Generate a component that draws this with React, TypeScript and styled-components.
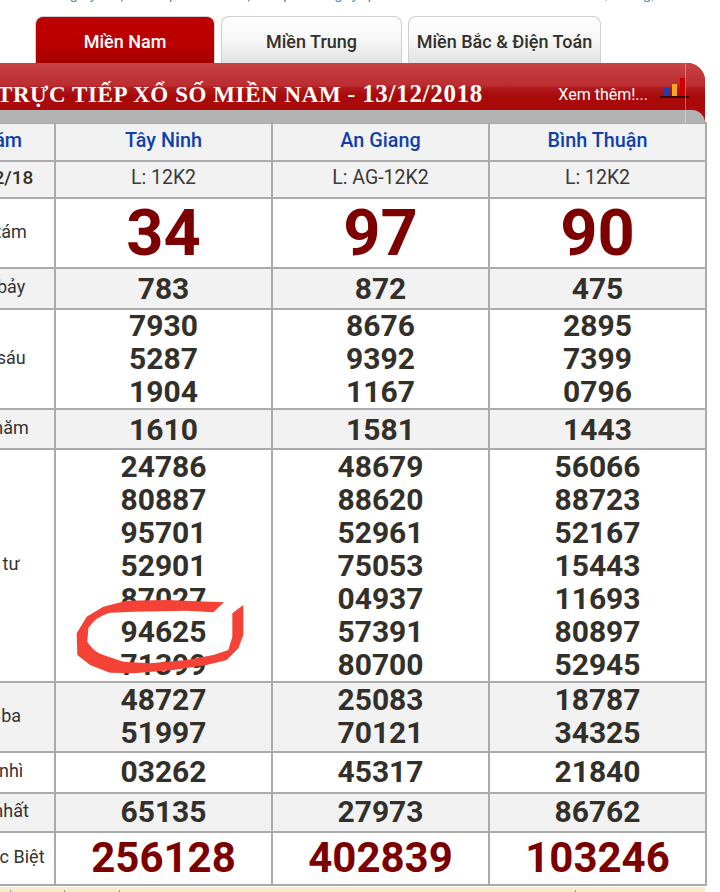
import React from "react";
import styled, { createGlobalStyle } from "styled-components";

const provinces = ["Tây Ninh", "An Giang", "Bình Thuận"];

interface PrizeRow {
  label: string;
  height: number;
  shaded?: boolean;
  size?: "huge" | "special";
  lift?: number;
  numbers: string[][];
}

const rows: PrizeRow[] = [
  { label: "Giải tám", height: 70, size: "huge", numbers: [["34"], ["97"], ["90"]] },
  { label: "Giải bảy", height: 41, shaded: true, numbers: [["783"], ["872"], ["475"]] },
  {
    label: "Giải sáu",
    height: 100,
    lift: 1,
    numbers: [
      ["7930", "5287", "1904"],
      ["8676", "9392", "1167"],
      ["2895", "7399", "0796"],
    ],
  },
  { label: "Giải năm", height: 40, shaded: true, numbers: [["1610"], ["1581"], ["1443"]] },
  {
    label: "Giải tư",
    height: 233,
    numbers: [
      ["24786", "80887", "95701", "52901", "87027", "94625", "71399"],
      ["48679", "88620", "52961", "75053", "04937", "57391", "80700"],
      ["56066", "88723", "52167", "15443", "11693", "80897", "52945"],
    ],
  },
  {
    label: "Giải ba",
    height: 70,
    shaded: true,
    lift: 1,
    numbers: [
      ["48727", "51997"],
      ["25083", "70121"],
      ["18787", "34325"],
    ],
  },
  { label: "Giải nhì", height: 41, lift: 1, numbers: [["03262"], ["45317"], ["21840"]] },
  { label: "Giải nhất", height: 39, shaded: true, lift: 1, numbers: [["65135"], ["27973"], ["86762"]] },
  { label: "Giải Đặc Biệt", height: 53, size: "special", lift: 1, numbers: [["256128"], ["402839"], ["103246"]] },
];

const footerCells = [11, 54, 55, 456];

const GlobalStyle = createGlobalStyle`
  html, body {
    margin: 0;
    background: #fff;
    overflow: hidden;
  }
  body {
    font-family: Roboto, "Liberation Sans", sans-serif;
  }
`;

const Page = styled.div`
  position: relative;
  width: 720px;
  height: 892px;
  overflow: hidden;
  background: #fff;
`;

const TopLine = styled.div`
  height: 3px;
  padding-left: 42px;
  display: flex;
  align-items: flex-end;
  overflow: hidden;
  color: #5b8ba5;
  font-size: 15.5px;
  line-height: 18px;
  white-space: nowrap;
  filter: blur(0.6px);
`;

const Tabs = styled.div`
  display: flex;
  gap: 6px;
  margin-top: 13px;
  padding-left: 35px;
`;

const Tab = styled.div<{ $active?: boolean; $width: number }>`
  box-sizing: border-box;
  width: ${(p) => p.$width}px;
  height: 47px;
  display: flex;
  align-items: center;
  justify-content: center;
  border: 1px solid #cfcfcf;
  border-bottom: 0;
  border-radius: 8px 8px 0 0;
  font-size: 18px;
  font-weight: 500;
  padding-top: 3px;
  color: ${(p) => (p.$active ? "#fff" : "#33302a")};
  background: ${(p) =>
    p.$active
      ? "linear-gradient(#bd0000, #bb0000 55%, #a50000)"
      : "linear-gradient(#fff, #f7f7f7 50%, #e2e2e2)"};
`;

const Banner = styled.div`
  position: relative;
  width: 705px;
  height: 60px;
  background: #a90c0c;
  border-top-right-radius: 18px;
  overflow: hidden;
`;

const BannerTitleRow = styled.div`
  height: 47px;
  display: flex;
  align-items: center;
  padding-top: 15px;
  box-sizing: border-box;
  background: linear-gradient(#c84346, #bb2c30 48%, #b0191c 54%, #a70808 72%, #ad0b0b);
`;

const BannerTitle = styled.div`
  font-family: "Liberation Serif", serif;
  font-weight: 700;
  font-size: 23px;
  letter-spacing: 0.58px;
  color: #fff;
  margin-left: -3px;
  white-space: nowrap;
`;

const BannerDate = styled.span`
  font-size: 25px;
  letter-spacing: 0.7px;
`;

const MoreLink = styled.a`
  margin-left: auto;
  margin-right: 57px;
  font-size: 16px;
  color: #fff;
  white-space: nowrap;
`;

const BannerShadow = styled.div`
  height: 13px;
  background: #b3b3b3;
  border-top-right-radius: 14px;
`;

const ChartMark = styled.svg`
  position: absolute;
  top: 0;
  left: 655px;
`;

const ResultTable = styled.table`
  table-layout: fixed;
  border-collapse: collapse;
  margin-top: -1px;
  margin-left: -69px;
  width: 774px;
`;

const LabelCol = styled.col`
  width: 123px;
`;

const ProvinceCol = styled.col`
  width: 217px;
`;

const Row = styled.tr<{ $height: number; $shaded?: boolean }>`
  height: ${(p) => p.$height}px;
  background: ${(p) => (p.$shaded ? "#f2f2f2" : "#fff")};
`;

const Cell = styled.td`
  padding: 0;
  border: 2px solid #ababab;
  text-align: center;
  vertical-align: middle;
`;

const HeaderText = styled.span`
  font-size: 19.8px;
  font-weight: 500;
  color: #0f3fae;
  position: relative;
  top: -2px;
`;

const DateText = styled.span`
  font-size: 19px;
  font-weight: 500;
  color: #33302a;
  position: relative;
  top: -2px;
`;

const LotText = styled.span`
  font-size: 19.5px;
  color: #3a3a3a;
  position: relative;
  top: -2px;
`;

const LabelText = styled.span`
  font-size: 18px;
  color: #333;
  position: relative;
  top: -2px;
`;

const Numbers = styled.div<{ $lift: number }>`
  display: flex;
  flex-direction: column;
  margin: -2px 0;
  transform: translateY(${(p) => -p.$lift}px);
`;

const sizes = { normal: 30, huge: 65, special: 42 };

const Num = styled.div<{ $size: keyof typeof sizes }>`
  font-size: ${(p) => sizes[p.$size]}px;
  line-height: ${(p) => (p.$size === "normal" ? "33px" : "1")};
  font-weight: 700;
  color: ${(p) => (p.$size === "normal" ? "#33302a" : "#7d0000")};
`;

const FooterStrip = styled.div`
  display: flex;
  margin-top: 1px;
  height: 8px;
  width: 705px;
  background: #f7ebc9;
  overflow: hidden;
`;

const FooterCell = styled.div<{ $width: number }>`
  box-sizing: border-box;
  width: ${(p) => p.$width}px;
  margin-top: 3px;
  border-right: 1px solid #999;
`;

const Scribble = styled.svg`
  position: absolute;
  left: 0;
  top: 570px;
`;

export default function App() {
  return (
    <Page>
      <GlobalStyle />
      <TopLine>Đăng ký nhận kết quả xổ số trực tiếp mỗi ngày qua tin nhắn của các đài miền Nam, Trung, Bắc nhanh nhất</TopLine>
      <Tabs>
        <Tab $active $width={180}>Miền Nam</Tab>
        <Tab $width={181}>Miền Trung</Tab>
        <Tab $width={193}>Miền Bắc &amp; Điện Toán</Tab>
      </Tabs>
      <Banner>
        <BannerTitleRow>
          <BannerTitle>
            TRỰC TIẾP XỔ SỐ MIỀN NAM - <BannerDate>13/12/2018</BannerDate>
          </BannerTitle>
          <MoreLink>Xem thêm!...</MoreLink>
        </BannerTitleRow>
        <BannerShadow />
        <ChartMark width="40" height="60" viewBox="0 0 40 60">
          <rect x="9" y="25" width="5" height="9" fill="#1f3fb0" />
          <rect x="17" y="21" width="5" height="13" fill="#f5a623" />
          <rect x="25" y="15" width="5" height="19" fill="#cc0000" />
          <rect x="5" y="33" width="29" height="2" fill="#3a0505" />
          <rect x="30" y="0" width="1" height="60" fill="#fff" opacity="0.35" />
        </ChartMark>
      </Banner>
      <ResultTable>
        <colgroup>
          <LabelCol />
          <ProvinceCol />
          <ProvinceCol />
          <ProvinceCol />
        </colgroup>
        <tbody>
          <Row $height={38} $shaded>
            <Cell><HeaderText>T.Năm</HeaderText></Cell>
            {provinces.map((name) => (
              <Cell key={name}><HeaderText>{name}</HeaderText></Cell>
            ))}
          </Row>
          <Row $height={37} $shaded>
            <Cell><DateText>13/12/18</DateText></Cell>
            <Cell><LotText>L: 12K2</LotText></Cell>
            <Cell><LotText>L: AG-12K2</LotText></Cell>
            <Cell><LotText>L: 12K2</LotText></Cell>
          </Row>
          {rows.map((row) => (
            <Row key={row.label} $height={row.height} $shaded={row.shaded}>
              <Cell><LabelText>{row.label}</LabelText></Cell>
              {row.numbers.map((list, i) => (
                <Cell key={i}>
                  <Numbers $lift={row.lift ?? 0}>
                    {list.map((n) => (
                      <Num key={n} $size={row.size ?? "normal"}>{n}</Num>
                    ))}
                  </Numbers>
                </Cell>
              ))}
            </Row>
          ))}
        </tbody>
      </ResultTable>
      <FooterStrip>
        {footerCells.map((w, i) => (
          <FooterCell key={i} $width={w} />
        ))}
      </FooterStrip>
      <Scribble width="300" height="130" viewBox="0 0 900 390">
        <path
          fill="#f44336"
          d="M672 97 L640 127 L560 122 L400 125 L330 128 Q285 140 265 175 L262 215 Q280 245 310 255 L370 275 L450 280 L560 270 L640 255 L685 240 L697 200 L697 130 L730 105 L730 195 L715 235 L680 270 L620 285 L520 300 L400 310 L330 308 L270 285 L232 255 L230 190 L260 140 L310 110 L380 92 L500 90 Z"
        />
      </Scribble>
    </Page>
  );
}
